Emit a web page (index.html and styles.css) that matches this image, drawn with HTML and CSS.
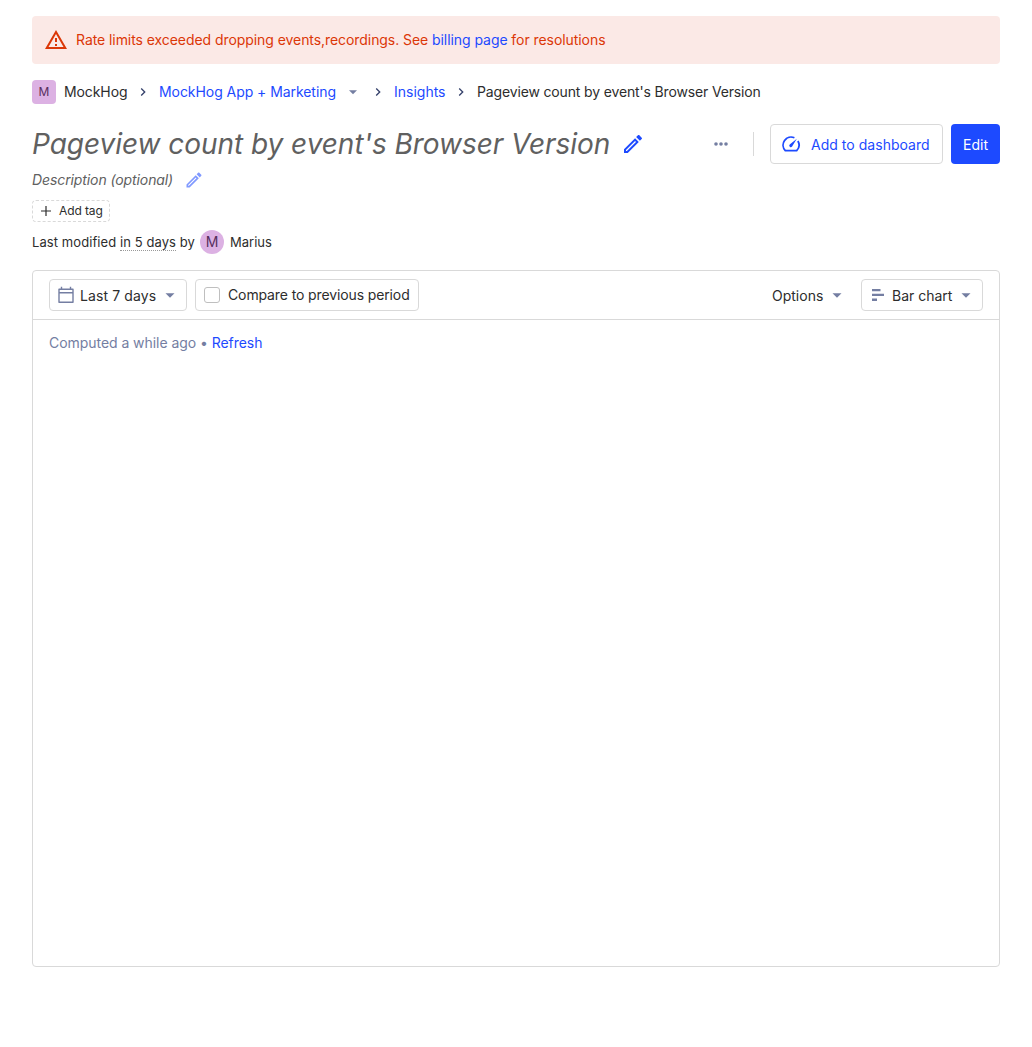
FILE: index.html
```html
<!DOCTYPE html>
<html lang="en">
<head>
<meta charset="utf-8">
<title>Pageview count by event's Browser Version</title>
<link rel="stylesheet" href="styles.css">
</head>
<body>
<svg class="sprite" aria-hidden="true">
  <symbol id="pencil" viewBox="0 0 24 24"><path fill="currentColor" d="M14.06 9.02l.92.92L5.92 19H5v-.92l9.06-9.06M17.66 3c-.25 0-.51.1-.7.29l-1.83 1.83 3.75 3.75 1.83-1.83a1 1 0 0 0 0-1.41l-2.34-2.34c-.2-.2-.45-.29-.71-.29zm-3.6 3.19L3 17.25V21h3.75L17.81 9.94l-3.75-3.75z"/></symbol>
  <symbol id="caret" viewBox="0 0 24 24"><path fill="currentColor" d="M6 9.5l6 6 6-6z"/></symbol>
  <symbol id="chevron" viewBox="0 0 24 24"><path fill="currentColor" d="M8.6 16.6l4.6-4.6-4.6-4.6L10 6l6 6-6 6z"/></symbol>
</svg>
<main class="page">
  <div class="banner">
    <svg class="i24" viewBox="0 0 24 24"><path fill="currentColor" d="M12 5.99L19.53 19H4.47L12 5.99M12 2L1 21h22L12 2zm1 14h-2v2h2v-2zm0-6h-2v4h2v-4z"/></svg>
    <p>Rate limits exceeded dropping events,recordings. See <a>billing page</a> for resolutions</p>
  </div>
  <nav class="crumbs">
    <span class="avatar avatar-square">M</span>
    <span class="crumb org">MockHog</span>
    <svg class="i16 sep"><use href="#chevron"/></svg>
    <a class="crumb project">MockHog App + Marketing</a>
    <svg class="i16 muted"><use href="#caret"/></svg>
    <svg class="i16 sep"><use href="#chevron"/></svg>
    <a class="crumb insights">Insights</a>
    <svg class="i16 sep"><use href="#chevron"/></svg>
    <span class="crumb current">Pageview count by event's Browser Version</span>
  </nav>
  <header class="head">
    <h1>Pageview count by event's Browser Version</h1>
    <svg class="i24 link"><use href="#pencil"/></svg>
    <div class="actions">
      <svg class="more" viewBox="0 0 24 24"><circle cx="7" cy="12" r="1.8"/><circle cx="12" cy="12" r="1.8"/><circle cx="17" cy="12" r="1.8"/></svg>
      <span class="rule"></span>
      <button class="btn btn-dash">
        <svg class="gauge" viewBox="0 0 20 20"><path d="M13.4 3.8A8 8 0 0 0 4.3 16.6H15.7A8 8 0 0 0 16.9 7" fill="none" stroke="currentColor" stroke-width="1.8" stroke-linejoin="round"/><path d="M15.8 4.8L8.7 10.4a1.6 1.6 0 1 0 2.4 2.2z" fill="currentColor"/></svg>
        <span>Add to dashboard</span>
      </button>
      <button class="btn btn-edit"><span>Edit</span></button>
    </div>
  </header>
  <div class="desc"><em>Description (optional)</em><svg class="i20 faded"><use href="#pencil"/></svg></div>
  <div class="tags"><span class="tag"><svg class="plus" viewBox="0 0 12 12"><path d="M6 1v10M1 6h10" stroke="currentColor" stroke-width="1.2"/></svg>Add tag</span></div>
  <div class="modified"><span class="when">Last modified <u>in 5 days</u> by</span><span class="avatar avatar-round">M</span><span>Marius</span></div>
  <section class="card">
    <div class="toolbar">
      <button class="control date">
        <svg class="i20 muted" viewBox="0 0 20 20"><path d="M3 4.2h14v13.1H3zM3 7.7h14M5.5 4V1.8M14.5 4V1.8" fill="none" stroke="currentColor" stroke-width="1.4" stroke-linejoin="round"/></svg>
        <span>Last 7 days</span><svg class="i18 muted"><use href="#caret"/></svg>
      </button>
      <label class="control compare"><i class="check"></i>Compare to previous period</label>
      <button class="control options"><span>Options</span><svg class="i18 muted"><use href="#caret"/></svg></button>
      <button class="control chart">
        <svg class="i20 muted" viewBox="0 0 20 20"><path d="M4 4h8.5v2.3H4zM4 8.8h12v2.3H4zM4 13.6h5V16H4z" fill="currentColor"/></svg>
        <span>Bar chart</span><svg class="i18 muted"><use href="#caret"/></svg>
      </button>
    </div>
    <p class="computed">Computed a while ago • <a>Refresh</a></p>
  </section>
</main>
</body>
</html>
```
FILE: styles.css
```css
* { box-sizing: border-box; }
body { margin: 0; background: #fff; color: #2d2d2d; font: 400 14px/20px Inter, "Liberation Sans", sans-serif; }
p, h1 { margin: 0; }
svg { display: block; flex: none; }
button { font: inherit; color: inherit; background: none; margin: 0; padding: 0; }
a, .link { color: #1d4aff; }
.sprite { position: absolute; width: 0; height: 0; }
.page { padding: 16px 32px; white-space: nowrap; }
.i16 { width: 16px; height: 16px; }
.i18 { width: 18px; height: 18px; }
.i20 { width: 20px; height: 20px; }
.i24 { width: 24px; height: 24px; }
.muted { color: #747ea2; }
.banner { display: flex; align-items: center; gap: 8px; height: 48px; padding: 0 12px; border-radius: 4px; background: #fbe9e6; color: #db3707; letter-spacing: -0.065px; }
.crumbs { display: flex; align-items: center; gap: 8px; height: 24px; margin-top: 16px; }
.org { width: 63px; letter-spacing: -0.1px; }
.project { width: 178px; letter-spacing: -0.06px; }
.project + svg + svg { margin-left: 1px; }
.insights { width: 51px; }
.current { letter-spacing: -0.15px; }
.sep { color: #35416b; }
.avatar { display: flex; align-items: center; justify-content: center; width: 24px; height: 24px; background: #dcb1e3; color: #572e5e; }
.avatar-square { border-radius: 4px; font-size: 12px; }
.avatar-round { border-radius: 50%; font-size: 14px; margin: 0 6px; }
.head { display: flex; align-items: center; height: 40px; margin-top: 20px; }
h1 { width: 577px; font-size: 28px; line-height: 40px; font-weight: 400; font-style: italic; letter-spacing: -0.04px; color: #606060; margin-right: 12px; }
.actions { display: flex; align-items: center; margin-left: auto; }
.more { width: 24px; height: 24px; fill: #747ea2; }
.rule { width: 1px; height: 24px; margin: 0 16px 0 20px; background: #d9d9d9; }
.btn { display: flex; align-items: center; height: 40px; border-radius: 4px; }
.btn span, button.control span { padding-top: 2px; }
.btn-dash { width: 173px; padding-left: 10px; gap: 10px; border: 1px solid #d9d9d9; color: #1d4aff; letter-spacing: 0.03px; }
.gauge { width: 20px; height: 20px; }
.btn-edit { width: 49px; justify-content: center; margin-left: 8px; border: 0; background: #1d4aff; color: #fff; }
.desc { display: flex; align-items: center; height: 24px; margin-top: 4px; color: #606060; }
.desc em { width: 141px; margin-right: 11px; letter-spacing: -0.1px; }
.faded { color: #8099ff; }
.tags { display: flex; margin-top: 8px; }
.tag { display: flex; align-items: center; gap: 7px; width: 78px; height: 22px; padding-left: 7px; border: 1px dashed #d9d9d9; border-radius: 4px; font-size: 12px; letter-spacing: -0.1px; }
.plus { width: 12px; height: 12px; }
.modified { display: flex; align-items: center; height: 24px; margin-top: 8px; font-size: 13px; }
.when { width: 162px; letter-spacing: 0.08px; }
u { text-decoration: none; border-bottom: 1px dotted #999; }
.card { height: 697px; margin-top: 16px; border: 1px solid #d9d9d9; border-radius: 4px; }
.toolbar { display: flex; align-items: center; height: 49px; padding: 0 16px; border-bottom: 1px solid #d9d9d9; }
.control { display: flex; align-items: center; height: 32px; border: 1px solid #d9d9d9; border-radius: 4px; }
.control span + svg { margin-left: auto; }
.date { width: 138px; padding: 0 7px 0 6px; gap: 4px; letter-spacing: 0.1px; }
.compare { width: 224px; margin-left: 8px; padding-left: 8px; gap: 8px; letter-spacing: -0.12px; }
.check { width: 16px; height: 16px; border: 1px solid #bfbfbf; border-radius: 3px; }
.options { width: 76px; margin-left: auto; margin-right: 14px; border-color: transparent; }
.chart { width: 122px; padding: 0 7px 0 6px; gap: 4px; }
.computed { padding: 13px 16px; color: #747ea2; letter-spacing: -0.05px; }
```
